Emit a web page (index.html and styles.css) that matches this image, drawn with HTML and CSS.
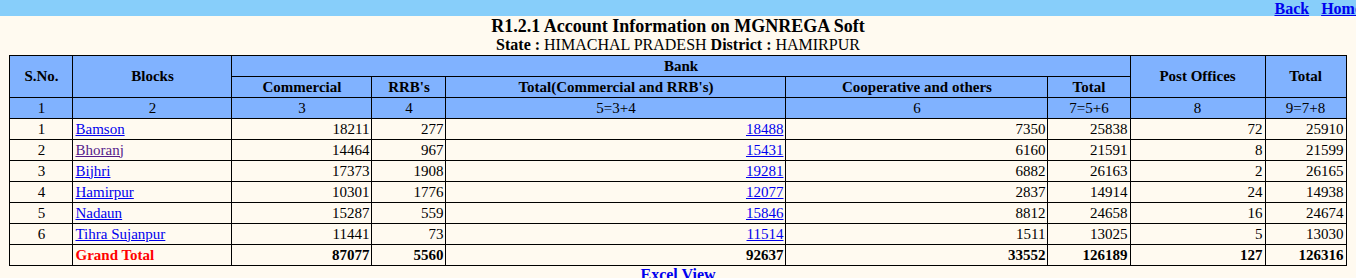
FILE: index.html
```html
<!DOCTYPE html>
<html>
<head>
<meta charset="utf-8">
<title>R1.2.1 Account Information on MGNREGA Soft</title>
<link rel="stylesheet" href="styles.css">
</head>
<body>
<div class="topbar">
  <nav class="toplinks"><a href="#">Back</a><a href="#">Home</a></nav>
</div>
<div class="heading">
  <div class="title">R1.2.1 Account Information on MGNREGA Soft</div>
  <div class="subtitle"><b>State :</b> HIMACHAL PRADESH <b>District :</b> HAMIRPUR</div>
</div>
<table class="report">
  <colgroup>
    <col class="c1"><col class="c2"><col class="c3"><col class="c4"><col class="c5"><col class="c6"><col class="c7"><col class="c8"><col class="c9">
  </colgroup>
  <thead>
    <tr class="hrow">
      <th rowspan="2">S.No.</th>
      <th rowspan="2">Blocks</th>
      <th colspan="5">Bank</th>
      <th rowspan="2">Post Offices</th>
      <th rowspan="2">Total</th>
    </tr>
    <tr class="hrow">
      <th>Commercial</th>
      <th>RRB's</th>
      <th>Total(Commercial and RRB's)</th>
      <th>Cooperative and others</th>
      <th>Total</th>
    </tr>
    <tr class="nrow">
      <td>1</td><td>2</td><td>3</td><td>4</td><td>5=3+4</td><td>6</td><td>7=5+6</td><td>8</td><td>9=7+8</td>
    </tr>
  </thead>
  <tbody>
    <tr><td class="ctr">1</td><td><a href="#">Bamson</a></td><td class="num">18211</td><td class="num">277</td><td class="num"><a href="#">18488</a></td><td class="num">7350</td><td class="num">25838</td><td class="num">72</td><td class="num">25910</td></tr>
    <tr><td class="ctr">2</td><td><a href="#" class="visited">Bhoranj</a></td><td class="num">14464</td><td class="num">967</td><td class="num"><a href="#">15431</a></td><td class="num">6160</td><td class="num">21591</td><td class="num">8</td><td class="num">21599</td></tr>
    <tr><td class="ctr">3</td><td><a href="#">Bijhri</a></td><td class="num">17373</td><td class="num">1908</td><td class="num"><a href="#">19281</a></td><td class="num">6882</td><td class="num">26163</td><td class="num">2</td><td class="num">26165</td></tr>
    <tr><td class="ctr">4</td><td><a href="#">Hamirpur</a></td><td class="num">10301</td><td class="num">1776</td><td class="num"><a href="#">12077</a></td><td class="num">2837</td><td class="num">14914</td><td class="num">24</td><td class="num">14938</td></tr>
    <tr><td class="ctr">5</td><td><a href="#">Nadaun</a></td><td class="num">15287</td><td class="num">559</td><td class="num"><a href="#">15846</a></td><td class="num">8812</td><td class="num">24658</td><td class="num">16</td><td class="num">24674</td></tr>
    <tr><td class="ctr">6</td><td><a href="#">Tihra Sujanpur</a></td><td class="num">11441</td><td class="num">73</td><td class="num"><a href="#">11514</a></td><td class="num">1511</td><td class="num">13025</td><td class="num">5</td><td class="num">13030</td></tr>
    <tr class="grand"><td></td><td class="gt">Grand Total</td><td class="num">87077</td><td class="num">5560</td><td class="num">92637</td><td class="num">33552</td><td class="num">126189</td><td class="num">127</td><td class="num">126316</td></tr>
  </tbody>
</table>
<div class="excel"><a href="#">Excel View</a></div>
</body>
</html>
```
FILE: styles.css
```css
html, body {
  margin: 0;
  padding: 0;
  overflow: hidden;
}
body {
  background: #fffaf0;
  font-family: "Liberation Serif", "Times New Roman", serif;
  color: #000;
}
.topbar {
  background: #87cefa;
  height: 16px;
  display: flex;
  justify-content: flex-end;
}
.toplinks {
  display: flex;
  gap: 12px;
  margin-right: -6px;
  font-size: 16px;
  font-weight: bold;
  line-height: 12px;
  height: 16px;
  align-items: flex-end;
}
.toplinks a {
  color: #0000ee;
  line-height: 14px;
}
.heading {
  text-align: center;
}
.title {
  font-size: 18px;
  font-weight: bold;
  line-height: 20px;
}
.subtitle {
  font-size: 16px;
  line-height: 18px;
}
.report {
  margin: 1px auto 0;
  width: 1337px;
  table-layout: fixed;
  border-collapse: collapse;
  border: 1px solid #000;
  font-size: 15px;
}
.c1 { width: 63px; }
.c2 { width: 159px; }
.c3 { width: 140px; }
.c4 { width: 74px; }
.c5 { width: 340px; }
.c6 { width: 262px; }
.c7 { width: 82px; }
.c8 { width: 135px; }
.c9 { width: 81px; }
.report th, .report td {
  border: 1px solid #000;
  height: 20px;
  padding: 0 2px;
  line-height: 17px;
}
.report th {
  background: #80b2ff;
  font-weight: bold;
  text-align: center;
}
.nrow td {
  background: #80b2ff;
  text-align: center;
}
.ctr { text-align: center; }
.num { text-align: right; }
.report a { color: #0000ee; }
.report a.visited { color: #551a8b; }
.grand td { font-weight: bold; }
.grand .gt { color: #ff0000; }
.excel {
  text-align: center;
  font-size: 16px;
  font-weight: bold;
  line-height: 18px;
}
.excel a {
  color: #0000ee;
  text-decoration: none;
}
```
